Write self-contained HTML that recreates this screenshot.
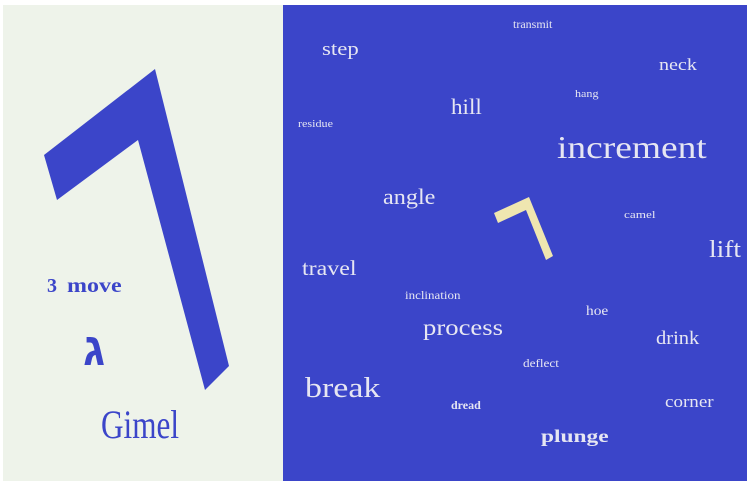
<!DOCTYPE html>
<html><head><style>
body{margin:0;width:750px;height:487px;background:#fff;position:relative;overflow:hidden;font-family:"Liberation Serif",serif}
#l{position:absolute;left:3px;top:5px;width:280px;height:476px;background:#eef3ea}
#r{position:absolute;left:283px;top:5px;width:464px;height:476px;background:#3b45c9}
.w{position:absolute;color:#e6e6f2;white-space:nowrap;line-height:1;transform-origin:left top}
.b{font-weight:bold}
</style></head><body>
<div id="l"></div>
<div id="r"></div>
<svg style="position:absolute;left:0;top:0" width="750" height="487">
<polygon points="155,69 44,155 57,200 138,140 205,390 229,366" fill="#3b45c9"/>
<polygon points="494,213 529,197 553,256 546,260 526,210 498,223" fill="#efe6b0"/>
</svg>
<div class="w b" style="left:47px;top:276px;font-size:20px;color:#3b45c9">3 &nbsp;<span style="display:inline-block;transform:scaleX(1.2);transform-origin:left">move</span></div>
<div class="w b" style="left:83px;top:326px;font-size:46px;color:#3b45c9;font-family:'Liberation Sans',sans-serif">ג</div>
<div class="w" style="left:101px;top:405px;font-size:40px;color:#3b45c9;transform:scaleX(0.78)">Gimel</div>
<div class="w" style="left:513px;top:18px;font-size:12px">transmit</div>
<div class="w" style="left:322px;top:40px;font-size:19px;transform:scaleX(1.2)">step</div>
<div class="w" style="left:659px;top:56px;font-size:17px;transform:scaleX(1.18)">neck</div>
<div class="w" style="left:575px;top:89px;font-size:11px;transform:scaleX(1.1)">hang</div>
<div class="w" style="left:451px;top:96px;font-size:22px;transform:scaleX(1.05)">hill</div>
<div class="w" style="left:298px;top:119px;font-size:11px;transform:scaleX(1.1)">residue</div>
<div class="w" style="left:557px;top:131px;font-size:32px;transform:scaleX(1.17)">increment</div>
<div class="w" style="left:383px;top:186px;font-size:22px;transform:scaleX(1.1)">angle</div>
<div class="w" style="left:624px;top:210px;font-size:11px;transform:scaleX(1.2)">camel</div>
<div class="w" style="left:709px;top:238px;font-size:24px;transform:scaleX(1.14)">lift</div>
<div class="w" style="left:302px;top:258px;font-size:21px;transform:scaleX(1.14)">travel</div>
<div class="w" style="left:405px;top:289px;font-size:12px;transform:scaleX(1.08)">inclination</div>
<div class="w" style="left:586px;top:305px;font-size:14px;transform:scaleX(1.1)">hoe</div>
<div class="w" style="left:423px;top:316px;font-size:23px;transform:scaleX(1.16)">process</div>
<div class="w" style="left:656px;top:329px;font-size:19px;transform:scaleX(1.08)">drink</div>
<div class="w" style="left:523px;top:357px;font-size:12px;transform:scaleX(1.1)">deflect</div>
<div class="w" style="left:305px;top:374px;font-size:29px;transform:scaleX(1.17)">break</div>
<div class="w" style="left:665px;top:393px;font-size:17px;transform:scaleX(1.12)">corner</div>
<div class="w b" style="left:451px;top:399px;font-size:12px">dread</div>
<div class="w b" style="left:541px;top:427px;font-size:18px;transform:scaleX(1.3)">plunge</div>
</body></html>
